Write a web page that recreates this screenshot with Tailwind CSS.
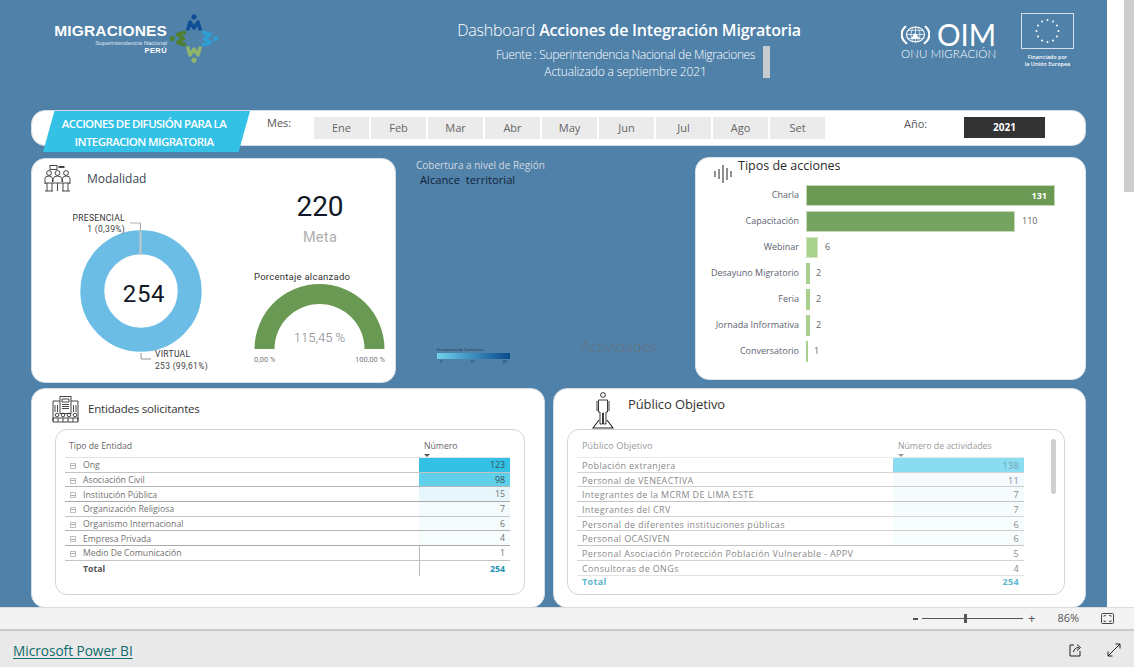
<!DOCTYPE html>
<html lang="es">
  <head>
    <meta charset="UTF-8" />
    <meta name="viewport" content="width=device-width, initial-scale=1.0" />
    <title>Dashboard Acciones de Integración Migratoria</title>
    <script src="https://cdn.jsdelivr.net/npm/@tailwindcss/browser@4"></script>
  </head>
  <body class="bg-white font-['Open_Sans',sans-serif] text-[#444] overflow-hidden">
    <div class="w-[1134px] h-[667px] flex flex-col overflow-hidden">
      <!-- report + page scrollbar -->
      <div class="h-[607px] flex">
        <div class="w-[1107px] h-[607px] bg-[#4f81a9] pl-[31px] pr-[21px] overflow-hidden">
          <!-- header -->
          <header class="h-[110px] flex relative">
            <!-- logo migraciones -->
            <div class="w-[170px] h-[70px] relative shrink-0">
              <div class="absolute left-[23px] top-[23px] w-[113px] text-right text-white leading-none font-['Liberation_Sans',sans-serif]">
                <p class="text-[15.5px] font-bold tracking-[0.15px] whitespace-nowrap">MIGRACIONES</p>
                <p class="text-[6px] mt-[1px] whitespace-nowrap text-white/80">Superintendencia Nacional</p>
                <p class="text-[7.5px] font-bold mt-[1px] tracking-[0.4px]">PERÚ</p>
              </div>
              <svg class="absolute left-[138px] top-[13px]" width="50" height="50" viewBox="0 0 50 50" fill="none" stroke-width="3.4" stroke-linejoin="round">
                <g stroke="#0f4d96"><path d="M18.5 17.5 L21 9 L25 15 L29 9 L31.5 17.5" /><circle cx="25" cy="3.8" r="2.6" fill="#0f4d96" stroke="none" /></g>
                <g stroke="#2e9dd3" transform="rotate(90 25 25.5)"><path d="M18.5 17.5 L21 9 L25 15 L29 9 L31.5 17.5" /><circle cx="25" cy="3.8" r="2.6" fill="#2e9dd3" stroke="none" /></g>
                <g stroke="#8fb56b" transform="rotate(180 25 25.5)"><path d="M18.5 17.5 L21 9 L25 15 L29 9 L31.5 17.5" /><circle cx="25" cy="3.8" r="2.6" fill="#8fb56b" stroke="none" /></g>
                <g stroke="#4f7f2f" transform="rotate(270 25 25.5)"><path d="M18.5 17.5 L21 9 L25 15 L29 9 L31.5 17.5" /><circle cx="25" cy="3.8" r="2.6" fill="#4f7f2f" stroke="none" /></g>
              </svg>
            </div>
            <!-- title -->
            <div class="absolute left-[388px] top-[20px] w-[420px] text-center text-white">
              <h1 class="text-[16px] leading-[21px] tracking-[-0.2px] whitespace-nowrap"><span class="font-light">Dashboard</span> <span class="font-semibold">Acciones de Integración Migratoria</span></h1>
              <p class="text-[12px] leading-[17px] mt-[5px] font-light whitespace-nowrap w-[373px] ml-[20px] tracking-[-0.35px]">Fuente : Superintendencia Nacional de Migraciones</p>
              <p class="text-[12px] leading-[17px] font-light whitespace-nowrap w-[373px] ml-[20px] tracking-[-0.15px]">Actualizado a septiembre 2021</p>
            </div>
            <div class="absolute left-[732px] top-[46px] w-[7px] h-[32px] bg-[#c9cccf]"></div>
            <!-- logo OIM -->
            <div class="absolute left-[870px] top-[21px] w-[97px] text-white">
              <div class="flex items-center gap-[7px] h-[26px]">
                <svg width="29" height="25" viewBox="0 0 29 30" preserveAspectRatio="none" fill="none" stroke="#fff" class="shrink-0">
                  <circle cx="14.5" cy="15" r="9" stroke-width="1.2" />
                  <ellipse cx="14.5" cy="15" rx="4.5" ry="9" stroke-width="0.8" />
                  <path d="M5.5 15 H23.5 M7 10 H22 M7 20 H22 M14.5 6 V24" stroke-width="0.8" />
                  <path d="M5 5 C-1 11 -1 20 6 26 M24 5 C30 11 30 20 23 26" stroke-width="2.4" />
                  <path d="M10 20 L14 13 L19 20 Z" fill="#fff" stroke="none" />
                </svg>
                <span class="text-[31px] leading-[26px] font-normal font-['Lato',sans-serif] scale-x-[0.95] origin-left">OIM</span>
              </div>
              <p class="text-[11.5px] leading-[12px] mt-[1px] font-light font-['Lato',sans-serif] tracking-[0.1px] whitespace-nowrap">ONU MIGRACIÓN</p>
            </div>
            <!-- bandera UE -->
            <div class="absolute left-[990px] top-[13px] w-[53px] text-white text-center">
              <svg width="53" height="36" viewBox="0 0 53 36" fill="#fff">
                <rect x="0.5" y="0.5" width="52" height="35" fill="none" stroke="#d5e0ea" />
                <circle cx="26.5" cy="7" r="1" /><circle cx="32" cy="8.5" r="1" /><circle cx="36" cy="12.5" r="1" /><circle cx="37.5" cy="18" r="1" /><circle cx="36" cy="23.5" r="1" /><circle cx="32" cy="27.5" r="1" /><circle cx="26.5" cy="29" r="1" /><circle cx="21" cy="27.5" r="1" /><circle cx="17" cy="23.5" r="1" /><circle cx="15.5" cy="18" r="1" /><circle cx="17" cy="12.5" r="1" /><circle cx="21" cy="8.5" r="1" />
              </svg>
              <p class="text-[5.5px] leading-[8px] mt-[4px] font-semibold whitespace-nowrap">Financiado por</p>
              <p class="text-[5.5px] leading-[7px] font-semibold whitespace-nowrap">la Unión Europea</p>
            </div>
          </header>

          <!-- filtros -->
          <section class="h-[36px] bg-white rounded-[14px] border border-[#d3dce4] relative flex items-start">
            <div class="absolute left-[11px] top-0 w-[207px] h-[41px] bg-[#33c1e6] [clip-path:polygon(5.5%_0,100%_0,94.5%_100%,0_100%)] text-white text-[11.5px] font-semibold leading-[18px] tracking-[-0.6px] text-center pt-[4px] pr-[5px]">
              <p>ACCIONES DE DIFUSIÓN PARA LA</p>
              <p>INTEGRACION MIGRATORIA</p>
            </div>
            <span class="ml-[235px] mt-[4px] text-[11px] leading-[16px] w-[47px] text-[#555]">Mes:</span>
            <div class="mt-[6px] flex gap-[2px] text-[11px] text-[#666]">
              <span class="w-[55px] h-[22px] bg-[#ebebeb] flex items-center justify-center">Ene</span>
              <span class="w-[55px] h-[22px] bg-[#ebebeb] flex items-center justify-center">Feb</span>
              <span class="w-[55px] h-[22px] bg-[#ebebeb] flex items-center justify-center">Mar</span>
              <span class="w-[55px] h-[22px] bg-[#ebebeb] flex items-center justify-center">Abr</span>
              <span class="w-[55px] h-[22px] bg-[#ebebeb] flex items-center justify-center">May</span>
              <span class="w-[55px] h-[22px] bg-[#ebebeb] flex items-center justify-center">Jun</span>
              <span class="w-[55px] h-[22px] bg-[#ebebeb] flex items-center justify-center">Jul</span>
              <span class="w-[55px] h-[22px] bg-[#ebebeb] flex items-center justify-center">Ago</span>
              <span class="w-[55px] h-[22px] bg-[#ebebeb] flex items-center justify-center">Set</span>
            </div>
            <span class="ml-[79px] mt-[5px] text-[11px] leading-[16px] w-[60px] text-[#555]">Año:</span>
            <span class="mt-[6px] w-[81px] h-[21px] bg-[#333] text-white text-[10px] font-bold flex items-center justify-center">2021</span>
          </section>

          <!-- fila central -->
          <section class="mt-[12px] flex items-start h-[225px]">
            <!-- modalidad -->
            <div class="w-[365px] h-[225px] bg-white rounded-[14px] border border-[#d3dce4] flex shrink-0 overflow-hidden">
              <div class="w-[200px] shrink-0">
                <div class="flex items-center h-[37px] pl-[12px] pt-[2px]">
                  <svg width="27" height="27" viewBox="0 0 27 27" fill="none" stroke="#333" stroke-width="0.9" class="shrink-0">
                    <rect x="6" y="0.5" width="7" height="4" /><rect x="15" y="1.5" width="5" height="1" />
                    <circle cx="5" cy="8" r="2.4" /><circle cx="13.5" cy="8" r="2.4" /><circle cx="22" cy="8" r="2.4" />
                    <path d="M1 19 V13.5 Q1 11 5 11 Q8 11 8.5 13.5 V17 M9 17 V14 Q9.5 11 13.5 11 Q17.5 11 18 14 V17 M18.5 17 V13.5 Q19 11 22 11 Q26 11 26 13.5 V19" />
                    <path d="M1 18 H26 M3 18 V26 M8 18 V26 M13.5 18 V26 M19 18 V26 M24 18 V26 M1 26 H9 M18 26 H26" />
                  </svg>
                  <span class="ml-[16px] text-[12px] text-[#3c4654]">Modalidad</span>
                </div>
                <svg width="200" height="186" viewBox="0 0 200 186" class="block font-['Roboto',sans-serif]">
                  <circle cx="109" cy="95" r="48.7" fill="none" stroke="#6bbde6" stroke-width="24" />
                  <rect x="107.5" y="35" width="2" height="24" fill="#c8c8c8" />
                  <path d="M98 27 H108.5 V35" fill="none" stroke="#9a9a9a" stroke-width="0.8" />
                  <path d="M109 157 V163 H119" fill="none" stroke="#7a7a7a" stroke-width="0.8" />
                  <text x="93" y="25" text-anchor="end" font-size="8.5" fill="#333" letter-spacing="0.3">PRESENCIAL</text>
                  <text x="93" y="36" text-anchor="end" font-size="8.5" fill="#444" letter-spacing="0.3">1 (0,39%)</text>
                  <text x="123" y="161" font-size="8.5" fill="#333" letter-spacing="0.3">VIRTUAL</text>
                  <text x="123" y="173" font-size="8.5" fill="#444" letter-spacing="0.3">253 (99,61%)</text>
                  <text x="112" y="106" text-anchor="middle" font-size="24" fill="#111827" letter-spacing="0.6">254</text>
                </svg>
              </div>
              <div class="w-[163px] pl-[22px] text-center font-['Roboto',sans-serif]">
                <p class="mt-[32px] text-[28px] leading-[32px] text-[#111827] tracking-[0px] w-[132px]">220</p>
                <p class="mt-[6px] text-[14.5px] leading-[18px] text-[#aeaeae] tracking-[0.3px] w-[132px]">Meta</p>
                <p class="mt-[23px] text-[9.5px] leading-[13px] text-[#333] text-left whitespace-nowrap tracking-[0.25px]">Porcentaje alcanzado</p>
                <svg width="132" height="88" viewBox="0 0 132 88" class="block mt-[-2px]">
                  <path d="M0.5 68 A65 65 0 0 1 130.5 68 H110.5 A45 45 0 0 0 20.5 68 Z" fill="#6a9953" />
                  <text x="65.5" y="61" text-anchor="middle" font-size="13" font-weight="300" fill="#7d838c">115,45 %</text>
                  <text x="0" y="81" font-size="7.5" fill="#777">0,00 %</text>
                  <text x="131" y="81" text-anchor="end" font-size="7.5" fill="#777">100,00 %</text>
                </svg>
              </div>
            </div>

            <!-- mapa -->
            <div class="w-[299px] h-[225px] shrink-0 relative">
              <p class="ml-[20px] text-[10px] leading-[14px] text-[#cfd8e0] whitespace-nowrap">Cobertura a nivel de Región</p>
              <p class="ml-[24px] text-[11.2px] leading-[16px] text-[#14233a] whitespace-nowrap">Alcance&nbsp; territorial</p>
              <div class="absolute left-[41px] top-[189px] w-[73px] text-[#1c2a38]">
                <p class="text-[4px] leading-[6px] whitespace-nowrap">Frecuencia de Comercios</p>
                <div class="h-[6px] bg-gradient-to-r from-[#6fd2ec] to-[#0a4a8c]"></div>
                <div class="flex justify-between text-[4px] leading-[6px] px-[3px]"><span>0</span><span>10</span><span>20</span></div>
              </div>
              <p class="absolute left-[185px] top-[177px] text-[15px] leading-[22px] font-light text-[#66727f]">Actividades</p>
            </div>

            <!-- tipos de acciones -->
            <div class="w-[391px] h-[223px] mt-[-1px] bg-white rounded-[14px] border border-[#dde4ea] shrink-0 overflow-hidden">
              <div class="flex items-start h-[26px] pl-[18px]">
                <svg width="18" height="18" viewBox="0 0 18 18" fill="none" stroke="#222" stroke-width="1" class="mt-[7px] shrink-0">
                  <path d="M1 6 V12 M5 4 V14 M9 0 V18 M13 3 V15 M17 6 V12" />
                </svg>
                <span class="ml-[6px] mt-[-1px] text-[12.5px] leading-[18px] text-[#2b2b2b] whitespace-nowrap">Tipos de acciones</span>
              </div>
              <div class="text-[9px] text-[#666] mt-[-2px]">
                <div class="flex items-center h-[26px]"><span class="w-[103px] text-right text-[#5c6470]">Charla</span><div class="ml-[7px] w-[249px] h-[21px] bg-[#6a9953] border border-[#c5d9b8] text-white font-bold text-right pr-[7px] leading-[19px]">131</div></div>
                <div class="flex items-center h-[26px]"><span class="w-[103px] text-right text-[#5c6470]">Capacitación</span><div class="ml-[7px] w-[209px] h-[21px] bg-[#74a45f] border border-[#c5d9b8]"></div><span class="ml-[7px]">110</span></div>
                <div class="flex items-center h-[26px]"><span class="w-[103px] text-right text-[#5c6470]">Webinar</span><div class="ml-[7px] w-[12px] h-[21px] bg-[#a9d18e] border border-[#d3e6c6]"></div><span class="ml-[7px]">6</span></div>
                <div class="flex items-center h-[26px]"><span class="w-[103px] text-right text-[#5c6470] whitespace-nowrap">Desayuno Migratorio</span><div class="ml-[7px] w-[4px] h-[21px] bg-[#a9d18e]"></div><span class="ml-[6px]">2</span></div>
                <div class="flex items-center h-[26px]"><span class="w-[103px] text-right text-[#5c6470]">Feria</span><div class="ml-[7px] w-[4px] h-[21px] bg-[#a9d18e]"></div><span class="ml-[6px]">2</span></div>
                <div class="flex items-center h-[26px]"><span class="w-[103px] text-right text-[#5c6470] whitespace-nowrap">Jornada Informativa</span><div class="ml-[7px] w-[4px] h-[21px] bg-[#a9d18e]"></div><span class="ml-[6px]">2</span></div>
                <div class="flex items-center h-[26px]"><span class="w-[103px] text-right text-[#5c6470]">Conversatorio</span><div class="ml-[7px] w-[2px] h-[21px] bg-[#a9d18e]"></div><span class="ml-[6px]">1</span></div>
              </div>
            </div>
          </section>

          <!-- fila inferior -->
          <section class="mt-[5px] flex gap-[8px] h-[220px]">
            <!-- entidades -->
            <div class="w-[514px] h-[220px] bg-white rounded-[14px] border border-[#d3dce4] shrink-0 overflow-hidden pl-[23px]">
              <div class="flex items-center h-[40px]">
                <svg width="27" height="27" viewBox="0 0 27 27" fill="none" stroke="#333" stroke-width="0.9" class="ml-[-3px] shrink-0">
                  <rect x="8" y="0.5" width="11" height="17" /><path d="M10 3 H17 V6 H10 Z M10 8.5 H17 M10 10.5 H17 M10 12.5 H17" />
                  <path d="M8 5 H1 V25 M19 5 H26 V25 M3 9 V16 M5.5 9 V16 M21.5 9 V16 M24 9 V16" />
                  <circle cx="5" cy="19" r="1.8" /><circle cx="11" cy="19" r="1.8" /><circle cx="17" cy="19" r="1.8" /><circle cx="23" cy="19" r="1.8" />
                  <path d="M1 22 H26 V26 H1 Z M6 22 V26 M11 22 V26 M16 22 V26 M21 22 V26" />
                </svg>
                <span class="ml-[9px] text-[11.5px] tracking-[-0.2px] text-[#333]">Entidades solicitantes</span>
              </div>
              <!-- tabla entidades -->
              <div class="w-[470px] h-[166px] rounded-[12px] border border-[#d4d4d4] pl-[9px] text-[8.7px] text-[#707070]">
                <div class="w-[445px] h-[28px] flex border-b border-[#e3e3e3] pt-[9px] text-[#666]">
                  <span class="w-[359px] pl-[4px] leading-[14px]">Tipo de Entidad</span>
                  <span class="leading-[14px] relative">Número<i class="absolute left-[0px] top-[15px] w-0 h-0 border-x-[3px] border-x-transparent border-t-[3px] border-t-[#555]"></i></span>
                </div>
                <div class="w-[445px]">
                  <div class="flex h-[14.7px] border-b border-[#c4c4c4] leading-[15px]"><span class="w-[354px] flex items-center pl-[5px] pt-[2px]"><i class="w-[6px] h-[6px] border border-[#c0c0c0] mr-[7px] bg-[linear-gradient(#aaa,#aaa)] bg-[length:4px_1px] bg-center bg-no-repeat"></i>Ong</span><span class="flex-1 bg-[#33c1e6] text-right pr-[5px] text-[#37505a]">123</span></div>
                  <div class="flex h-[14.7px] border-b border-[#b5b5b5] leading-[15px]"><span class="w-[354px] flex items-center pl-[5px] pt-[2px]"><i class="w-[6px] h-[6px] border border-[#c0c0c0] mr-[7px] bg-[linear-gradient(#aaa,#aaa)] bg-[length:4px_1px] bg-center bg-no-repeat"></i>Asociación Civil</span><span class="flex-1 bg-[#5fcfea] text-right pr-[5px] text-[#37505a]">98</span></div>
                  <div class="flex h-[14.7px] border-b border-[#aaa] leading-[15px]"><span class="w-[354px] flex items-center pl-[5px] pt-[2px]"><i class="w-[6px] h-[6px] border border-[#c0c0c0] mr-[7px] bg-[linear-gradient(#aaa,#aaa)] bg-[length:4px_1px] bg-center bg-no-repeat"></i>Institución Pública</span><span class="flex-1 bg-[#e6f6fb] text-right pr-[5px]">15</span></div>
                  <div class="flex h-[14.7px] border-b border-[#c4c4c4] leading-[15px]"><span class="w-[354px] flex items-center pl-[5px] pt-[2px]"><i class="w-[6px] h-[6px] border border-[#c0c0c0] mr-[7px] bg-[linear-gradient(#aaa,#aaa)] bg-[length:4px_1px] bg-center bg-no-repeat"></i>Organización Religiosa</span><span class="flex-1 bg-[#f4fbfd] text-right pr-[5px]">7</span></div>
                  <div class="flex h-[14.7px] border-b border-[#b5b5b5] leading-[15px]"><span class="w-[354px] flex items-center pl-[5px] pt-[2px]"><i class="w-[6px] h-[6px] border border-[#c0c0c0] mr-[7px] bg-[linear-gradient(#aaa,#aaa)] bg-[length:4px_1px] bg-center bg-no-repeat"></i>Organismo Internacional</span><span class="flex-1 bg-[#f5fbfd] text-right pr-[5px]">6</span></div>
                  <div class="flex h-[14.7px] border-b border-[#aaa] leading-[15px]"><span class="w-[354px] flex items-center pl-[5px] pt-[2px]"><i class="w-[6px] h-[6px] border border-[#c0c0c0] mr-[7px] bg-[linear-gradient(#aaa,#aaa)] bg-[length:4px_1px] bg-center bg-no-repeat"></i>Empresa Privada</span><span class="flex-1 bg-[#f7fcfd] text-right pr-[5px]">4</span></div>
                  <div class="flex h-[14.7px] border-b border-[#c4c4c4] leading-[15px]"><span class="w-[354px] flex items-center pl-[5px] pt-[2px]"><i class="w-[6px] h-[6px] border border-[#c0c0c0] mr-[7px] bg-[linear-gradient(#aaa,#aaa)] bg-[length:4px_1px] bg-center bg-no-repeat"></i>Medio De Comunicación</span><span class="flex-1 border-l border-[#bbb] text-right pr-[5px]">1</span></div>
                  <div class="flex h-[15px] leading-[17px] font-bold"><span class="w-[354px] pl-[18px] text-[#555]">Total</span><span class="flex-1 border-l border-[#bbb] text-right pr-[5px] text-[#1c93b3]">254</span></div>
                </div>
              </div>
            </div>

            <!-- público objetivo -->
            <div class="w-[533px] h-[220px] bg-white rounded-[14px] border border-[#d3dce4] shrink-0 overflow-hidden pl-[13px]">
              <div class="flex items-start h-[40px]">
                <svg width="22" height="37" viewBox="0 0 22 37" fill="none" stroke="#222" stroke-width="0.9" class="ml-[25px] mt-[3px] shrink-0">
                  <circle cx="11" cy="3" r="2.4" />
                  <path d="M6.5 8 H15.5 V20 H14 V32 H11.5 V21 H10.5 V32 H8 V20 H6.5 Z M5 9 V19 M17 9 V19" />
                  <path d="M7 28 L1 36 H21 L15 28" stroke-width="1.1" />
                </svg>
                <span class="ml-[14px] mt-[6px] text-[13px] leading-[18px] tracking-[-0.1px] text-[#333]">Público Objetivo</span>
              </div>
              <!-- tabla público -->
              <div class="w-[498px] h-[166px] rounded-[12px] border border-[#d4d4d4] pl-[9px] text-[9px] text-[#8a8a8a] tracking-[0.35px] relative overflow-hidden">
                <div class="w-[447px] h-[28px] flex border-b border-[#e9e9e9] pt-[9px]">
                  <span class="w-[321px] pl-[5px] leading-[14px] text-[#9a9a9a] tracking-[0.15px]">Público Objetivo</span>
                  <span class="leading-[14px] relative text-[#9a9a9a] text-[8.7px] tracking-[0px]">Número de actividades<i class="absolute left-[0px] top-[15px] w-0 h-0 border-x-[3px] border-x-transparent border-t-[3px] border-t-[#999]"></i></span>
                </div>
                <div class="w-[447px]">
                  <div class="flex h-[14.7px] border-b border-[#d4d4d4] leading-[16px]"><span class="w-[316px] pl-[5px] whitespace-nowrap">Población extranjera</span><span class="flex-1 bg-[#8adcf0] text-right pr-[5px] text-[#7ea3ae]">138</span></div>
                  <div class="flex h-[14.7px] border-b border-[#cfcfcf] leading-[15px]"><span class="w-[316px] pl-[5px] whitespace-nowrap">Personal de VENEACTIVA</span><span class="flex-1 bg-[#f4fafd] text-right pr-[5px]">11</span></div>
                  <div class="flex h-[14.7px] border-b border-[#c4c4c4] leading-[15px]"><span class="w-[316px] pl-[5px] whitespace-nowrap">Integrantes de la MCRM DE LIMA ESTE</span><span class="flex-1 bg-[#f6fbfd] text-right pr-[5px]">7</span></div>
                  <div class="flex h-[14.7px] border-b border-[#d4d4d4] leading-[15px]"><span class="w-[316px] pl-[5px] whitespace-nowrap">Integrantes del CRV</span><span class="flex-1 bg-[#f6fbfd] text-right pr-[5px]">7</span></div>
                  <div class="flex h-[14.7px] border-b border-[#cfcfcf] leading-[15px]"><span class="w-[316px] pl-[5px] whitespace-nowrap">Personal de diferentes instituciones públicas</span><span class="flex-1 bg-[#f7fcfd] text-right pr-[5px]">6</span></div>
                  <div class="flex h-[14.7px] border-b border-[#c4c4c4] leading-[15px]"><span class="w-[316px] pl-[5px] whitespace-nowrap">Personal OCASIVEN</span><span class="flex-1 bg-[#f7fcfd] text-right pr-[5px]">6</span></div>
                  <div class="flex h-[14.7px] border-b border-[#d4d4d4] leading-[15px]"><span class="w-[316px] pl-[5px] whitespace-nowrap">Personal Asociación Protección Población Vulnerable - APPV</span><span class="flex-1 text-right pr-[5px]">5</span></div>
                  <div class="flex h-[14.7px] border-b border-[#e3e3e3] leading-[15px]"><span class="w-[316px] pl-[5px] whitespace-nowrap">Consultoras de ONGs</span><span class="flex-1 text-right pr-[5px]">4</span></div>
                  <div class="flex h-[13px] leading-[12px] font-bold text-[#5fb6cf]"><span class="w-[316px] pl-[5px]">Total</span><span class="flex-1 text-right pr-[5px]">254</span></div>
                </div>
                <div class="absolute left-[483px] top-[9px] w-[5px] h-[55px] rounded-full bg-[#cfcfcf]"></div>
              </div>
            </div>
          </section>
        </div>
        <!-- scrollbar de página -->
        <div class="w-[27px] h-[607px] bg-white flex justify-end">
          <div class="w-[10px] h-[192px] bg-[#cdcdcd]"></div>
        </div>
      </div>

      <!-- barra de zoom -->
      <div class="h-[24px] bg-[#f3f3f3] border-t border-[#dcdcdc] border-b-2 border-b-[#cacaca] flex items-center text-[#555] text-[11px]">
        <span class="ml-[913px] w-[5px] h-[2px] bg-[#555]"></span>
        <div class="ml-[4px] w-[101px] h-[1px] bg-[#555] relative">
          <i class="absolute left-[42px] top-[-4px] w-[3px] h-[9px] bg-[#555]"></i>
        </div>
        <span class="ml-[5px] text-[13px] leading-none">+</span>
        <span class="ml-[22px] text-[11px]">86%</span>
        <svg width="13" height="11" viewBox="0 0 13 11" fill="none" stroke="#444" class="ml-[22px]">
          <rect x="0.5" y="0.5" width="12" height="10" rx="1" />
          <path d="M3 4 V2.5 H5 M8 2.5 H10 V4 M3 7 V8.5 H5 M8 8.5 H10 V7" stroke-width="0.8" />
        </svg>
      </div>

      <!-- pie -->
      <footer class="flex-1 bg-[#e9e9e9] flex items-center pl-[13px]">
        <a href="#" class="w-[120px] text-[#0e6b6b] text-[13.6px] underline underline-offset-2 mt-[5px] whitespace-nowrap">Microsoft Power BI</a>
        <svg width="14" height="14" viewBox="0 0 14 14" fill="none" stroke="#222" stroke-width="1" class="ml-[935px] mt-[2px]">
          <path d="M6 2 H2 V13 H12 V8 M5.5 9 C6 6 8 4.5 11 4.5 M9 1.5 L12.5 4.5 L9 7.5" />
        </svg>
        <svg width="14" height="14" viewBox="0 0 14 14" fill="none" stroke="#222" stroke-width="1" class="ml-[25px] mt-[2px]">
          <path d="M8.5 1 H13 V5.5 M13 1 L1 13 M1 8.5 V13 H5.5" />
        </svg>
      </footer>
    </div>
  </body>
</html>
